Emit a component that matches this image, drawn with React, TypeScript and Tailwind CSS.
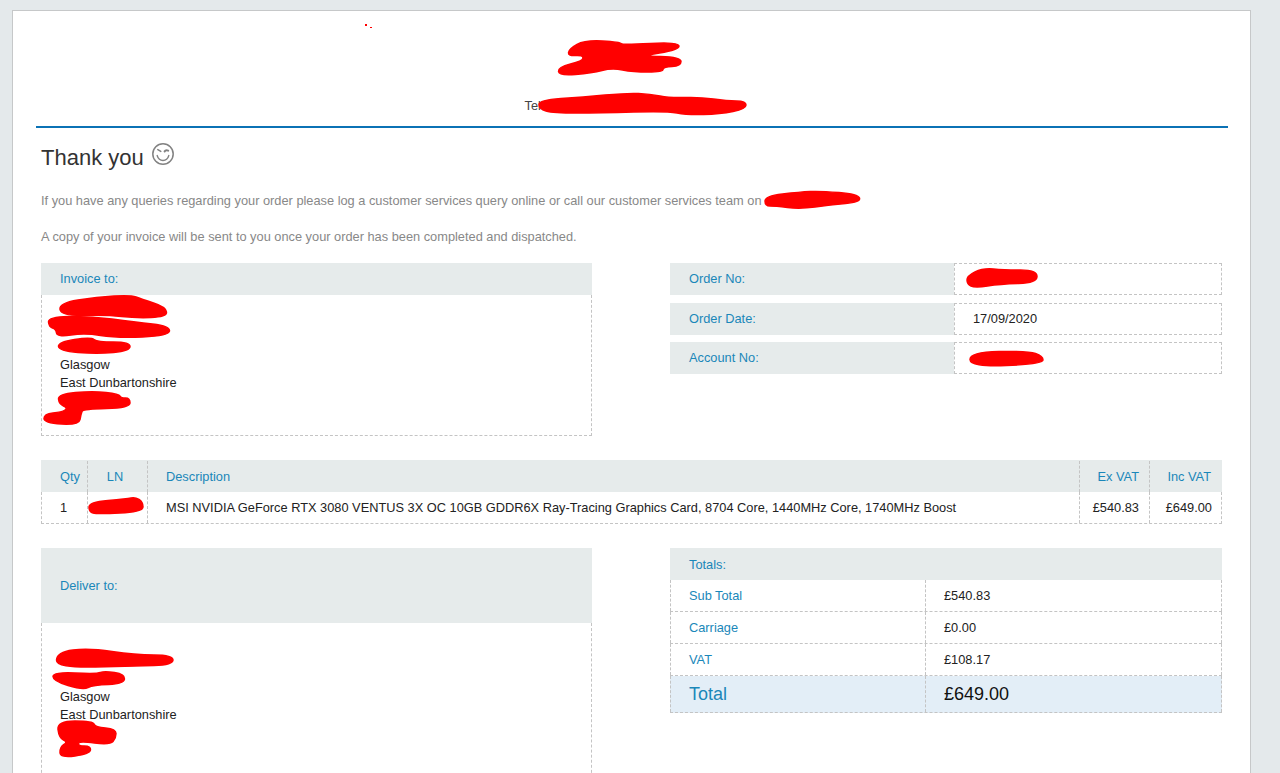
const redactions = [
  '569,49 585,40 620,42 622,45 679,42 679,50 640,56 681,57 681,66 663,67 663,72 633,72 612,68 592,73 559,76 558,67 583,61 583,55 568,56',
  '539,100 583,97 627,93 650,94 670,98 700,97 727,101 746,101 746,109 720,114 687,115 667,111 600,113 553,113 539,109',
  '765,196 800,192 820,191 858,194 861,202 830,205 800,209 775,206 765,206',
  '59,303 97,297 131,295 141,299 166,307 167,317 135,318 108,315 61,316',
  '48,317 89,316 135,322 170,326 169,336 116,338 85,333 57,337 56,329 49,327',
  '58,342 91,337 97,342 130,342 130,351 97,354 59,351',
  '58,394 93,391 119,394 121,398 130,398 130,408 83,409 81,414 79,425 44,423 44,414 62,412 68,408 59,404',
  '89,502 127,499 135,497 143,502 143,512 97,514 89,512',
  '967,276 983,268 1004,270 1037,270 1037,283 1000,284 975,288 967,284',
  '970,352 1028,351 1043,356 1043,364 970,367',
  '57,652 89,648 135,655 173,655 173,665 135,666 56,668',
  '53,672 97,674 104,671 125,674 124,684 93,685 83,690 53,681',
  '57,721 93,721 95,727 116,729 116,738 110,745 79,741 78,746 91,746 90,754 60,758 60,747 68,742 59,738',
];

// rounds the corners so the shapes read as marker pen, not polygons
const toMarkerPath = (points: string) => {
  const pts = points.split(' ').map(p => p.split(',').map(Number));
  const mid = (a: number[], b: number[]) => `${(a[0] + b[0]) / 2},${(a[1] + b[1]) / 2}`;
  let d = `M${mid(pts[pts.length - 1], pts[0])}`;
  pts.forEach((p, i) => {
    d += ` Q${p[0]},${p[1]} ${mid(p, pts[(i + 1) % pts.length])}`;
  });
  return d + 'Z';
};

const Smiley = () => (
  <svg width="24" height="24" viewBox="0 0 24 24" fill="none" stroke="#828282" strokeWidth="1.5" strokeLinecap="round" className="ml-[7px] mb-[6px]">
    <circle cx="12" cy="12" r="10.2" />
    <path d="M6.8 7.6l3 1.8" />
    <path d="M13.6 9.4c.6-.9 2.2-1.3 3.6-.7" strokeWidth="2" />
    <path d="M6.2 13.6c1 3.2 3.3 4.9 5.8 4.9s4.8-1.7 5.8-4.9" />
  </svg>
);

const AddressBox = ({ title, lines, tall }: { title: string; lines: string[]; tall?: boolean }) => (
  <div className="w-[551px]">
    <div className={`bg-[#e6ebeb] pl-[19px] flex items-center text-[#1a87b9] ${tall ? 'h-[75px]' : 'h-[32px]'}`}>{title}</div>
    <div className={`border-x border-dashed border-[#c4c4c4] pl-[18px] leading-[18px] text-[#222] ${tall ? 'pt-[29px] h-[160px]' : 'border-b pt-[7px] pb-[7px]'}`}>
      {lines.map((line, i) => (
        <div key={i} className="h-[18px]">{line}</div>
      ))}
    </div>
  </div>
);

const InfoRow = ({ label, value }: { label: string; value?: string }) => (
  <div className="flex h-[32px]">
    <div className="w-[284px] bg-[#e6ebeb] pl-[19px] flex items-center text-[#1a87b9]">{label}</div>
    <div className="flex-1 border border-dashed border-[#c4c4c4] pl-[18px] flex items-center text-[#222]">{value}</div>
  </div>
);

const TotalRow = ({ label, value }: { label: string; value: string }) => (
  <div className="flex h-[32px] border-b border-dashed border-[#c4c4c4]">
    <div className="w-[256px] pl-[18px] border-x border-dashed border-[#c4c4c4] flex items-center text-[#1a87b9]">{label}</div>
    <div className="flex-1 pl-[18px] border-r border-dashed border-[#c4c4c4] flex items-center text-[#222]">{value}</div>
  </div>
);

export default function App() {
  return (
    <div className="relative h-[773px] overflow-hidden bg-[#e4e9eb] pt-[10px] pl-[12px] pr-[29px] font-['Liberation_Sans',Arial,sans-serif] text-[12.8px]">
      <div className="h-[780px] bg-white border border-[#c6c8c9] pl-[23px] pr-[22px]">
        <div className="h-[117px] border-b-2 border-[#0b72b5] flex items-end justify-center pb-[13px] pr-[15px]">
          <span className="w-[200px] leading-[15px] text-[#444]">Tel</span>
        </div>

        <div className="pl-[5px] pr-[6px]">
          <div className="flex items-center h-[30px] mt-[14px] text-[22px] text-[#333]">
            Thank you
            <Smiley />
          </div>
          <p className="mt-[20px] leading-[18px] text-[#888]">
            If you have any queries regarding your order please log a customer services query online or call our customer services team on
          </p>
          <p className="mt-[18px] leading-[18px] text-[#888]">
            A copy of your invoice will be sent to you once your order has been completed and dispatched.
          </p>

          <div className="flex justify-between mt-[17px]">
            <AddressBox title="Invoice to:" lines={['', '', '', 'Glasgow', 'East Dunbartonshire', '', '']} />
            <div className="w-[552px] flex flex-col gap-[7.5px]">
              <InfoRow label="Order No:" />
              <InfoRow label="Order Date:" value="17/09/2020" />
              <InfoRow label="Account No:" />
            </div>
          </div>

          <div className="mt-[24px]">
            <div className="flex h-[32px] pt-px bg-[#e6ebeb] text-[#1a87b9]">
              <div className="w-[46px] pl-[19px] flex items-center">Qty</div>
              <div className="w-[60px] pr-[5px] border-l border-dashed border-[#c4c4c4] flex items-center justify-center">LN</div>
              <div className="flex-1 pl-[18px] border-l border-dashed border-[#c4c4c4] flex items-center">Description</div>
              <div className="w-[70px] pr-[10px] border-l border-dashed border-[#c4c4c4] flex items-center justify-end">Ex VAT</div>
              <div className="w-[73px] pr-[11px] border-l border-dashed border-[#c4c4c4] flex items-center justify-end">Inc VAT</div>
            </div>
            <div className="flex h-[32px] border-x border-b border-dashed border-[#c4c4c4] text-[#222]">
              <div className="w-[45px] pl-[18px] flex items-center">1</div>
              <div className="w-[60px] border-l border-dashed border-[#c4c4c4]" />
              <div className="flex-1 pl-[18px] border-l border-dashed border-[#c4c4c4] flex items-center">
                MSI NVIDIA GeForce RTX 3080 VENTUS 3X OC 10GB GDDR6X Ray-Tracing Graphics Card, 8704 Core, 1440MHz Core, 1740MHz Boost
              </div>
              <div className="w-[70px] pr-[10px] border-l border-dashed border-[#c4c4c4] flex items-center justify-end">£540.83</div>
              <div className="w-[72px] pr-[9px] border-l border-dashed border-[#c4c4c4] flex items-center justify-end">£649.00</div>
            </div>
          </div>

          <div className="flex justify-between mt-[24px]">
            <AddressBox tall title="Deliver to:" lines={['', '', 'Glasgow', 'East Dunbartonshire', '', '']} />
            <div className="w-[552px]">
              <div className="h-[32px] pt-px bg-[#e6ebeb] pl-[19px] flex items-center text-[#1a87b9]">Totals:</div>
              <TotalRow label="Sub Total" value="£540.83" />
              <TotalRow label="Carriage" value="£0.00" />
              <TotalRow label="VAT" value="£108.17" />
              <div className="flex h-[37px] bg-[#e3eef7] border-b border-dashed border-[#c4c4c4] text-[18px]">
                <div className="w-[256px] pl-[18px] border-x border-dashed border-[#c4c4c4] flex items-center text-[#1a87b9]">Total</div>
                <div className="flex-1 pl-[18px] border-r border-dashed border-[#c4c4c4] flex items-center text-[#111]">£649.00</div>
              </div>
            </div>
          </div>
        </div>
      </div>

      {/* red marker scribbled over the private details */}
      <svg className="absolute inset-0 pointer-events-none" width="1280" height="773" viewBox="0 0 1280 773" fill="#ff0000" stroke="#ff0000" strokeWidth="1.5" strokeLinejoin="round">
        {redactions.map((points, i) => (
          <path key={i} d={toMarkerPath(points)} />
        ))}
        <rect x="365" y="24" width="2" height="2" stroke="none" />
        <rect x="370" y="27" width="2" height="1" stroke="none" />
      </svg>
    </div>
  );
}
